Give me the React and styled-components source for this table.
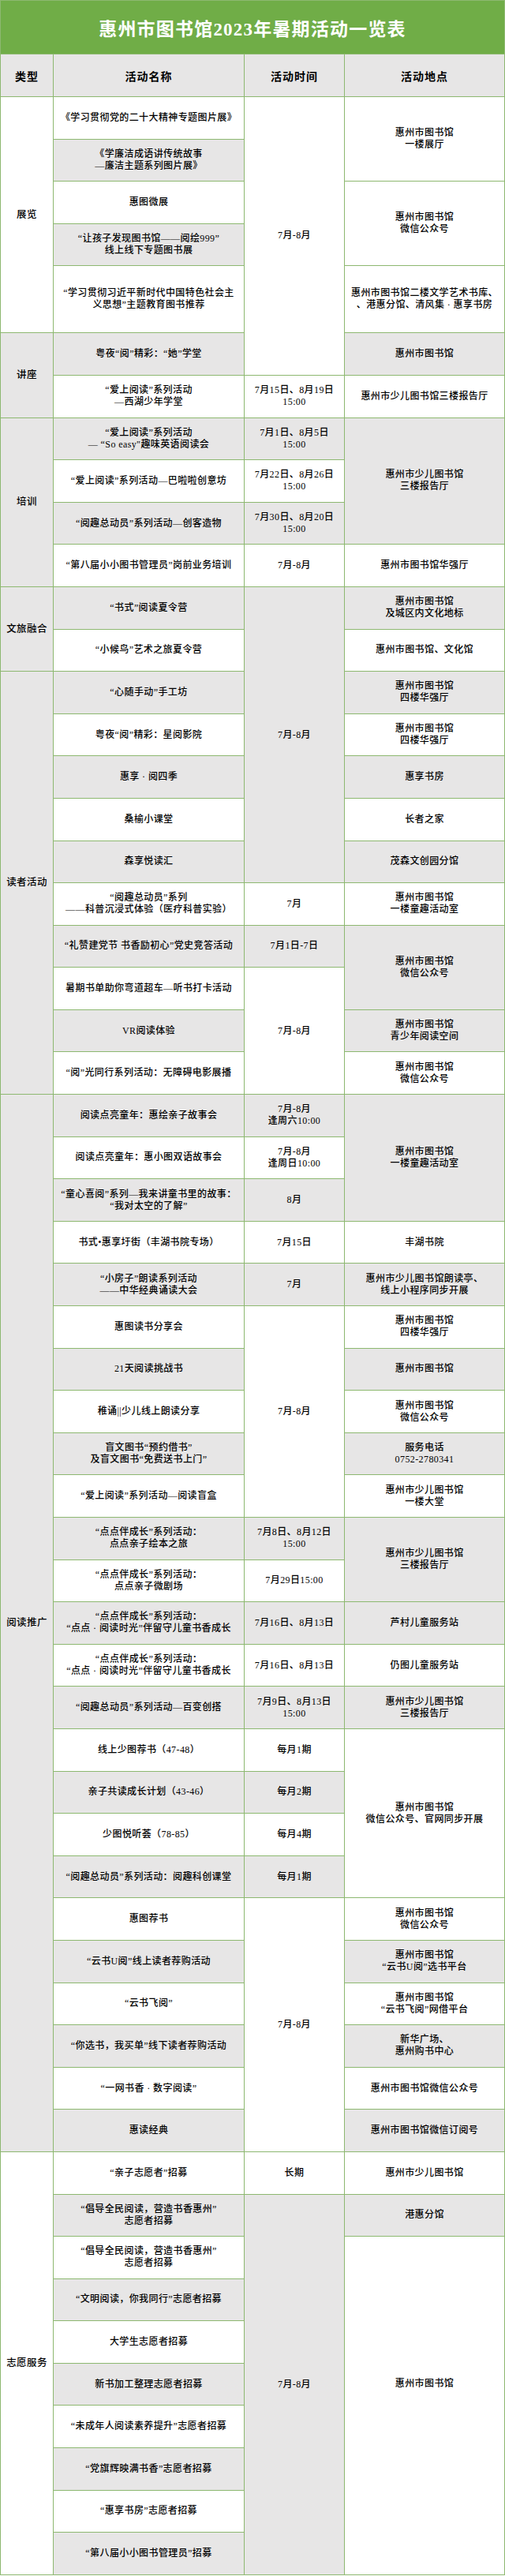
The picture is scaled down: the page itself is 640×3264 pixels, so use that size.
import React from "react";
import styled, { createGlobalStyle } from "styled-components";

const GlobalStyle = createGlobalStyle`
  html, body {
    margin: 0;
    padding: 0;
    background: #ffffff;
  }
  body {
    font-family: "Liberation Serif", "Noto Sans CJK SC", serif;
  }
`;

const LINE = "#8db870";
const GRAY = "#e7e6e6";

const Sheet = styled.div`
  display: grid;
  box-sizing: border-box;
  width: 640px;
  grid-template-columns: 66px 241px 126px 202px;
  grid-template-rows: 67px 53px repeat(4, 52.6px) 84px repeat(53, 52.6px);
  gap: 1px;
  background: ${LINE};
  border: 1px solid ${LINE};
`;

const Title = styled.div`
  grid-column: 1 / -1;
  display: flex;
  align-items: center;
  justify-content: center;
  background: #70ad47;
  color: #ffffff;
  font-family: "Liberation Serif", "Noto Sans CJK SC", serif;
  font-size: 23px;
  font-weight: 700;
  letter-spacing: 1.2px;
`;

const HeadCell = styled.div`
  display: flex;
  align-items: center;
  justify-content: center;
  background: ${GRAY};
  color: #000;
  font-size: 14px;
  font-weight: 700;
  letter-spacing: 1px;
`;

const Cell = styled.div`
  grid-row: span ${(p) => p.$span || 1};
  display: flex;
  align-items: center;
  justify-content: center;
  box-sizing: border-box;
  padding: 0 3px;
  background: ${(p) => (p.$shade ? GRAY : "#ffffff")};
  color: #000;
  text-align: center;
  white-space: pre-line;
  font-size: 12px;
  line-height: 15px;
  letter-spacing: 0.4px;
  font-weight: 500;
`;

const TypeCell = styled(Cell)`
  grid-column: 1;
  font-size: 12.5px;
`;

const NameCell = styled(Cell)`
  grid-column: 2;
`;

const TimeCell = styled(Cell)`
  grid-column: 3;
`;

const PlaceCell = styled(Cell)`
  grid-column: 4;
  padding-bottom: ${(p) => (p.$lift ? "54px" : "0")};
`;

// t: 类型, time / place: [text, span, shaded]
const rows = [
  { t: ["展览", 5, 0], n: "《学习贯彻党的二十大精神专题图片展》", time: ["7月-8月", 6, 0], place: ["惠州市图书馆\n一楼展厅", 2, 0] },
  { n: "《学廉洁成语讲传统故事\n—廉洁主题系列图片展》" },
  { n: "惠图微展", place: ["惠州市图书馆\n微信公众号", 2, 0] },
  { n: "“让孩子发现图书馆——阅绘999”\n线上线下专题图书展" },
  { n: "“学习贯彻习近平新时代中国特色社会主\n义思想”主题教育图书推荐", place: ["惠州市图书馆二楼文学艺术书库、\n、港惠分馆、清风集 · 惠享书房", 1, 0] },
  { t: ["讲座", 2, 1], n: "粤夜“阅”精彩：“她”学堂", place: ["惠州市图书馆", 1, 1] },
  { n: "“爱上阅读”系列活动\n—西湖少年学堂", time: ["7月15日、8月19日\n15:00", 1, 0], place: ["惠州市少儿图书馆三楼报告厅", 1, 0] },
  { t: ["培训", 4, 1], n: "“爱上阅读”系列活动\n— “So easy\"趣味英语阅读会", time: ["7月1日、8月5日\n15:00", 1, 1], place: ["惠州市少儿图书馆\n三楼报告厅", 3, 1] },
  { n: "“爱上阅读”系列活动—巴啦啦创意坊", time: ["7月22日、8月26日\n15:00", 1, 0] },
  { n: "“阅趣总动员”系列活动—创客造物", time: ["7月30日、8月20日\n15:00", 1, 1] },
  { n: "“第八届小小图书管理员”岗前业务培训", time: ["7月-8月", 1, 0], place: ["惠州市图书馆华强厅", 1, 0] },
  { t: ["文旅融合", 2, 1], n: "“书式”阅读夏令营", time: ["7月-8月", 7, 1], place: ["惠州市图书馆\n及城区内文化地标", 1, 1] },
  { n: "“小候鸟”艺术之旅夏令营", place: ["惠州市图书馆、文化馆", 1, 0] },
  { t: ["读者活动", 10, 1], n: "“心随手动”手工坊", place: ["惠州市图书馆\n四楼华强厅", 1, 1] },
  { n: "粤夜“阅”精彩：星阅影院", place: ["惠州市图书馆\n四楼华强厅", 1, 0] },
  { n: "惠享 · 阅四季", place: ["惠享书房", 1, 1] },
  { n: "桑榆小课堂", place: ["长者之家", 1, 0] },
  { n: "森享悦读汇", place: ["茂森文创园分馆", 1, 1] },
  { n: "“阅趣总动员”系列\n——科普沉浸式体验（医疗科普实验）", time: ["7月", 1, 0], place: ["惠州市图书馆\n一楼童趣活动室", 1, 0] },
  { n: "“礼赞建党节 书香励初心”党史竞答活动", time: ["7月1日-7日", 1, 1], place: ["惠州市图书馆\n微信公众号", 2, 1] },
  { n: "暑期书单助你弯道超车—听书打卡活动", time: ["7月-8月", 3, 0] },
  { n: "VR阅读体验", place: ["惠州市图书馆\n青少年阅读空间", 1, 1] },
  { n: "“阅”光同行系列活动：无障碍电影展播", place: ["惠州市图书馆\n微信公众号", 1, 0] },
  { t: ["阅读推广", 25, 1], n: "阅读点亮童年：惠绘亲子故事会", time: ["7月-8月\n逢周六10:00", 1, 1], place: ["惠州市图书馆\n一楼童趣活动室", 3, 1] },
  { n: "阅读点亮童年：惠小图双语故事会", time: ["7月-8月\n逢周日10:00", 1, 0] },
  { n: "“童心喜阅”系列—我来讲童书里的故事：\n“我对太空的了解”", time: ["8月", 1, 1] },
  { n: "书式•惠享圩街（丰湖书院专场）", time: ["7月15日", 1, 0], place: ["丰湖书院", 1, 0] },
  { n: "“小房子”朗读系列活动\n——中华经典诵读大会", time: ["7月", 1, 1], place: ["惠州市少儿图书馆朗读亭、\n线上小程序同步开展", 1, 1] },
  { n: "惠图读书分享会", time: ["7月-8月", 5, 0], place: ["惠州市图书馆\n四楼华强厅", 1, 0] },
  { n: "21天阅读挑战书", place: ["惠州市图书馆", 1, 1] },
  { n: "稚诵||少儿线上朗读分享", place: ["惠州市图书馆\n微信公众号", 1, 0] },
  { n: "盲文图书“预约借书”\n及盲文图书“免费送书上门”", place: ["服务电话\n0752-2780341", 1, 1] },
  { n: "“爱上阅读”系列活动—阅读盲盒", place: ["惠州市少儿图书馆\n一楼大堂", 1, 0] },
  { n: "“点点伴成长”系列活动：\n点点亲子绘本之旅", time: ["7月8日、8月12日\n15:00", 1, 1], place: ["惠州市少儿图书馆\n三楼报告厅", 2, 1] },
  { n: "“点点伴成长”系列活动：\n点点亲子微剧场", time: ["7月29日15:00", 1, 0] },
  { n: "“点点伴成长”系列活动：\n“点点 · 阅读时光”伴留守儿童书香成长", time: ["7月16日、8月13日", 1, 1], place: ["芦村儿童服务站", 1, 1] },
  { n: "“点点伴成长”系列活动：\n“点点 · 阅读时光”伴留守儿童书香成长", time: ["7月16日、8月13日", 1, 0], place: ["仍图儿童服务站", 1, 0] },
  { n: "“阅趣总动员”系列活动—百变创搭", time: ["7月9日、8月13日\n15:00", 1, 1], place: ["惠州市少儿图书馆\n三楼报告厅", 1, 1] },
  { n: "线上少图荐书（47-48）", time: ["每月1期", 1, 0], place: ["惠州市图书馆\n微信公众号、官网同步开展", 4, 0] },
  { n: "亲子共读成长计划（43-46）", time: ["每月2期", 1, 1] },
  { n: "少图悦听荟（78-85）", time: ["每月4期", 1, 0] },
  { n: "“阅趣总动员”系列活动：阅趣科创课堂", time: ["每月1期", 1, 1] },
  { n: "惠图荐书", time: ["7月-8月", 6, 0], place: ["惠州市图书馆\n微信公众号", 1, 0] },
  { n: "“云书U阅”线上读者荐购活动", place: ["惠州市图书馆\n“云书U阅”选书平台", 1, 1] },
  { n: "“云书飞阅”", place: ["惠州市图书馆\n“云书飞阅”网借平台", 1, 0] },
  { n: "“你选书，我买单”线下读者荐购活动", place: ["新华广场、\n惠州购书中心", 1, 1] },
  { n: "“一网书香 · 数字阅读”", place: ["惠州市图书馆微信公众号", 1, 0] },
  { n: "惠读经典", place: ["惠州市图书馆微信订阅号", 1, 1] },
  { t: ["志愿服务", 10, 0], n: "“亲子志愿者”招募", time: ["长期", 1, 0], place: ["惠州市少儿图书馆", 1, 0] },
  { n: "“倡导全民阅读，营造书香惠州”\n志愿者招募", time: ["7月-8月", 9, 1], place: ["港惠分馆", 1, 1] },
  { n: "“倡导全民阅读，营造书香惠州”\n志愿者招募", place: ["惠州市图书馆", 8, 0, true] },
  { n: "“文明阅读，你我同行”志愿者招募" },
  { n: "大学生志愿者招募" },
  { n: "新书加工整理志愿者招募" },
  { n: "“未成年人阅读素养提升”志愿者招募" },
  { n: "“党旗辉映满书香”志愿者招募" },
  { n: "“惠享书房”志愿者招募" },
  { n: "“第八届小小图书管理员”招募" },
];

export default function App() {
  return (
    <>
      <GlobalStyle />
      <Sheet>
        <Title>惠州市图书馆2023年暑期活动一览表</Title>
        <HeadCell>类型</HeadCell>
        <HeadCell>活动名称</HeadCell>
        <HeadCell>活动时间</HeadCell>
        <HeadCell>活动地点</HeadCell>
        {rows.map((row, i) => (
          <React.Fragment key={i}>
            {row.t && (
              <TypeCell $span={row.t[1]} $shade={row.t[2]}>
                {row.t[0]}
              </TypeCell>
            )}
            <NameCell $shade={i % 2 === 1}>{row.n}</NameCell>
            {row.time && (
              <TimeCell $span={row.time[1]} $shade={row.time[2]}>
                {row.time[0]}
              </TimeCell>
            )}
            {row.place && (
              <PlaceCell $span={row.place[1]} $shade={row.place[2]} $lift={row.place[3]}>
                {row.place[0]}
              </PlaceCell>
            )}
          </React.Fragment>
        ))}
      </Sheet>
    </>
  );
}
